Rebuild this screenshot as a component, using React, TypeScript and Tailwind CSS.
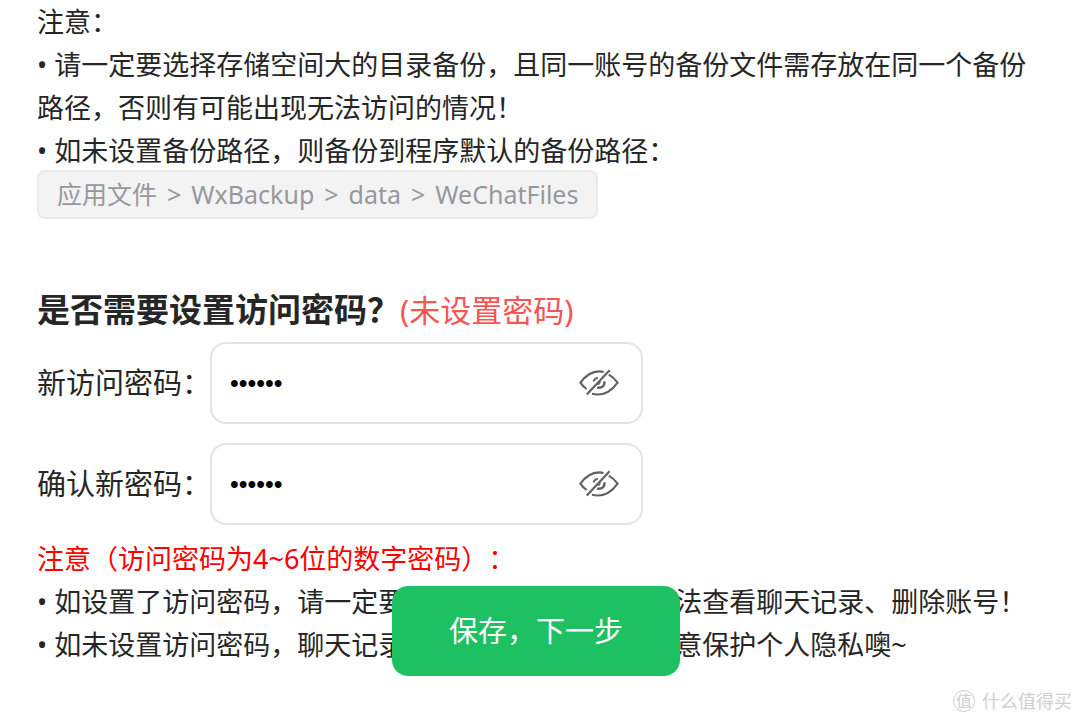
import { useState } from "react";

function HiddenEye() {
  return (
    <svg viewBox="0 0 40 28" className="h-7 w-10" fill="none" stroke="#606060" strokeWidth="2.1" strokeLinecap="butt" aria-hidden="true">
      <path d="M24.6 2.9C16.500 1 8.500 4 1.400 13.600C3 16 5 18.200 7.600 20" />
      <path d="M13 24.800C22 27 31.500 23.500 38.600 13.600C36.200 10.300 33.400 7.600 29.800 5.600" />
      <path d="M14.400 12.400C15 10.500 16.600 9.200 19 8.900" strokeWidth="1.8" />
      <path d="M25.300 12.200C26 16.400 23.400 19.400 18 18.600" strokeWidth="2.4" />
      <path d="M20.800 12.400C21.300 14.200 20.400 15.200 18.400 15.400" strokeWidth="1.4" />
      <path d="M7.800 25.400L30.600 1.200" strokeWidth="2.2" />
    </svg>
  );
}

function PasswordRow({ id, label }: { id: string; label: string }) {
  const [value, setValue] = useState("123456");
  const [shown, setShown] = useState(false);
  return (
    <div className="flex items-center">
      <label htmlFor={id} className="w-[173px] shrink-0 whitespace-nowrap text-[29px] leading-10">
        {label}
      </label>
      <div className="flex h-[82px] w-full max-w-[433px] items-center rounded-2xl border-2 border-[#e2e2e2] bg-white pr-[22px] pl-[18px]">
        <input
          id={id}
          type={shown ? "text" : "password"}
          value={value}
          onChange={(e) => setValue(e.target.value)}
          className="h-10 min-w-0 flex-1 bg-transparent font-['Liberation_Sans',sans-serif] text-[25px] text-black outline-none"
        />
        <button type="button" aria-label="显示或隐藏密码" onClick={() => setShown(!shown)} className="shrink-0">
          <HiddenEye />
        </button>
      </div>
    </div>
  );
}

export default function App() {
  return (
    <div className="relative min-h-screen bg-white pr-[45px] pl-[37px] font-['Noto_Sans','Noto_Sans_CJK_SC',sans-serif] text-[#262626]">
      <section>
        <div className="-mb-0.5 text-[27px] leading-[43px]">
          <p>注意：</p>
          <p>• 请一定要选择存储空间大的目录备份，且同一账号的备份文件需存放在同一个备份路径，否则有可能出现无法访问的情况！</p>
          <p>• 如未设置备份路径，则备份到程序默认的备份路径：</p>
        </div>
        <div className="flex w-fit gap-2.5 rounded-lg border-2 border-[#e9e9e9] bg-[#f3f3f3] px-[18px] text-[25px] leading-[45px] text-[#96989e]">
          <span>应用文件</span>
          <span>&gt;</span>
          <span>WxBackup</span>
          <span>&gt;</span>
          <span>data</span>
          <span>&gt;</span>
          <span>WeChatFiles</span>
        </div>
      </section>

      <form className="relative mt-[66px] pb-12" onSubmit={(e) => e.preventDefault()}>
        <h2 className="flex items-center text-[33px] leading-[50px] font-bold">
          是否需要设置访问密码？
          <span className="text-[31px] font-normal text-[#f95454]">(未设置密码)</span>
        </h2>
        <div className="mt-[7px] flex flex-col gap-[19px]">
          <PasswordRow id="new-password" label="新访问密码：" />
          <PasswordRow id="confirm-password" label="确认新密码：" />
        </div>
        <div className="mt-3 text-[27px] leading-[43px] whitespace-nowrap">
          <p className="text-[#ff0000] [text-spacing-trim:space-all]">注意（访问密码为4~6位的数字密码）：</p>
          <p>• 如设置了访问密码，请一定要牢记密码，否则将会无法查看聊天记录、删除账号！</p>
          <p>• 如未设置访问密码，聊天记录可以直接查看，请您注意保护个人隐私噢~</p>
        </div>
        <button
          type="submit"
          className="absolute bottom-[38px] left-1/2 h-[90px] w-72 -translate-x-1/2 rounded-2xl bg-[#1dc162] text-[29px] text-white"
        >
          保存，下一步
        </button>
      </form>

      <div className="absolute right-2 bottom-2 flex items-center gap-[7px] text-[18px] leading-7 text-[#cfcfcf]">
        <span className="flex size-[22px] items-center justify-center rounded-full border border-[#cfcfcf] text-[16px]">值</span>
        什么值得买
      </div>
    </div>
  );
}
